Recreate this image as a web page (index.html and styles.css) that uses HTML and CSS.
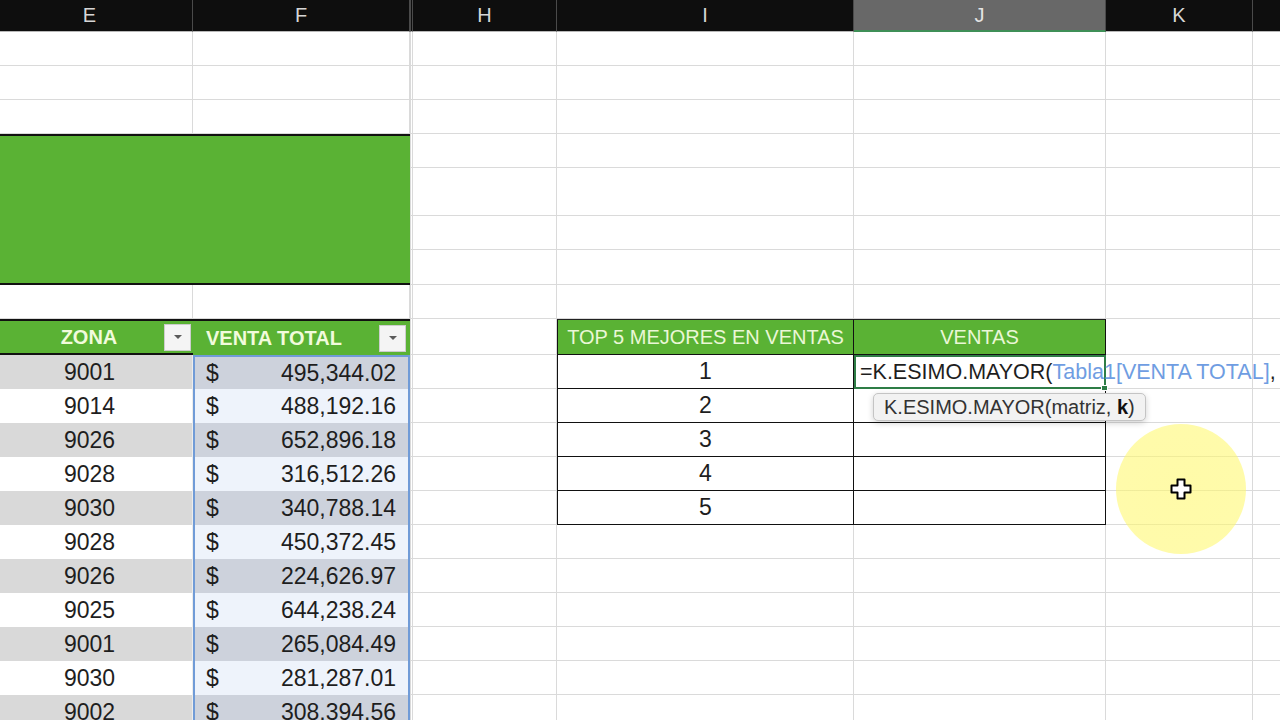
FILE: index.html
```html
<!DOCTYPE html>
<html lang="es">
<head>
<meta charset="utf-8">
<title>Excel - K.ESIMO.MAYOR</title>
<link rel="stylesheet" href="styles.css">
</head>
<body>
<div class="sheet">
  <!-- column headers -->
  <div class="c h">E</div><div class="c h">F</div><div class="c h g"></div><div class="c h">H</div><div class="c h">I</div><div class="c h sel">J</div><div class="c h">K</div><div class="c h"></div>
  <!-- rows 1-3 -->
  <div class="c"></div><div class="c"></div><div class="c g"></div><div class="c"></div><div class="c"></div><div class="c"></div><div class="c"></div><div class="c"></div>
  <div class="c"></div><div class="c"></div><div class="c g"></div><div class="c"></div><div class="c"></div><div class="c"></div><div class="c"></div><div class="c"></div>
  <div class="c"></div><div class="c"></div><div class="c g"></div><div class="c"></div><div class="c"></div><div class="c"></div><div class="c"></div><div class="c"></div>
  <!-- rows 4-7 with merged green band -->
  <div class="band"></div>
  <div class="c g"></div><div class="c"></div><div class="c"></div><div class="c"></div><div class="c"></div><div class="c"></div>
  <div class="c g"></div><div class="c"></div><div class="c"></div><div class="c"></div><div class="c"></div><div class="c"></div>
  <div class="c g"></div><div class="c"></div><div class="c"></div><div class="c"></div><div class="c"></div><div class="c"></div>
  <div class="c g"></div><div class="c"></div><div class="c"></div><div class="c"></div><div class="c"></div><div class="c"></div>
  <!-- row 8 -->
  <div class="c"></div><div class="c"></div><div class="c g"></div><div class="c"></div><div class="c"></div><div class="c"></div><div class="c"></div><div class="c"></div>
  <!-- row 9: table headers -->
  <div class="c th th-zona"><span></span><span>ZONA</span><span class="fbtn"><svg width="10" height="6" viewBox="0 0 10 6"><path d="M1 1h8L5 5z" fill="#5a5a5a"/></svg></span></div>
  <div class="c th th-venta"><span>VENTA TOTAL</span><span class="fbtn"><svg width="10" height="6" viewBox="0 0 10 6"><path d="M1 1h8L5 5z" fill="#5a5a5a"/></svg></span></div>
  <div class="c g"></div><div class="c"></div>
  <div class="c tb ti thead">TOP 5 MEJORES EN VENTAS</div>
  <div class="c tb thead">VENTAS</div>
  <div class="c"></div><div class="c"></div>
  <!-- row 10 -->
  <div class="c ze odd">9001</div><div class="c vf odd first"><span>$</span><span>495,344.02</span></div><div class="c g"></div><div class="c"></div>
  <div class="c tb ti num">1</div>
  <div class="c tb edit">
    <span class="formula">=K.ESIMO.MAYOR(<span class="ref">Tabla1[VENTA TOTAL]</span>,</span>
    <span class="handle"></span>
    <div class="tip">K.ESIMO.MAYOR(matriz, <b>k</b>)</div>
  </div>
  <div class="c"></div><div class="c"></div>
  <!-- row 11 -->
  <div class="c ze">9014</div><div class="c vf"><span>$</span><span>488,192.16</span></div><div class="c g"></div><div class="c"></div>
  <div class="c tb ti num">2</div><div class="c tb"></div><div class="c"></div><div class="c"></div>
  <!-- row 12 -->
  <div class="c ze odd">9026</div><div class="c vf odd"><span>$</span><span>652,896.18</span></div><div class="c g"></div><div class="c"></div>
  <div class="c tb ti num">3</div><div class="c tb"></div><div class="c"></div><div class="c"></div>
  <!-- row 13 -->
  <div class="c ze">9028</div><div class="c vf"><span>$</span><span>316,512.26</span></div><div class="c g"></div><div class="c"></div>
  <div class="c tb ti num">4</div><div class="c tb"></div><div class="c"></div><div class="c"></div>
  <!-- row 14 -->
  <div class="c ze odd">9030</div><div class="c vf odd"><span>$</span><span>340,788.14</span></div><div class="c g"></div><div class="c"></div>
  <div class="c tb ti num">5</div><div class="c tb"></div><div class="c"></div><div class="c"></div>
  <!-- row 15 -->
  <div class="c ze">9028</div><div class="c vf"><span>$</span><span>450,372.45</span></div><div class="c g"></div><div class="c"></div><div class="c"></div><div class="c"></div><div class="c"></div><div class="c"></div>
  <!-- row 16 -->
  <div class="c ze odd">9026</div><div class="c vf odd"><span>$</span><span>224,626.97</span></div><div class="c g"></div><div class="c"></div><div class="c"></div><div class="c"></div><div class="c"></div><div class="c"></div>
  <!-- row 17 -->
  <div class="c ze">9025</div><div class="c vf"><span>$</span><span>644,238.24</span></div><div class="c g"></div><div class="c"></div><div class="c"></div><div class="c"></div><div class="c"></div><div class="c"></div>
  <!-- row 18 -->
  <div class="c ze odd">9001</div><div class="c vf odd"><span>$</span><span>265,084.49</span></div><div class="c g"></div><div class="c"></div><div class="c"></div><div class="c"></div><div class="c"></div><div class="c"></div>
  <!-- row 19 -->
  <div class="c ze">9030</div><div class="c vf"><span>$</span><span>281,287.01</span></div><div class="c g"></div><div class="c"></div><div class="c"></div><div class="c"></div><div class="c"></div><div class="c"></div>
  <!-- row 20 -->
  <div class="c ze odd">9002</div><div class="c vf odd"><span>$</span><span>308,394.56</span></div><div class="c g"></div><div class="c"></div><div class="c"></div><div class="c"></div><div class="c"></div><div class="c"></div>
</div>

<div class="glow"></div>
<svg class="cursor" width="24" height="24" viewBox="0 0 24 24">
  <path d="M8.5 2.5h7v6h6v7h-6v6h-7v-6h-6v-7h6z" fill="#fff" stroke="#000" stroke-width="2" stroke-linejoin="round"/>
</svg>
</body>
</html>
```

FILE: styles.css
```css
* { box-sizing: border-box; }

html, body {
  margin: 0;
  padding: 0;
  background: #ffffff;
}

body {
  width: 1280px;
  height: 720px;
  overflow: hidden;
  position: relative;
  font-family: "Liberation Sans", Arial, sans-serif;
  color: #1e1e1e;
}

.sheet {
  display: grid;
  margin-left: -13px;
  grid-template-columns: 206px 217px 3px 144px 297px 252px 147px 100px;
  grid-template-rows: 32px 34px 34px 34px 34px 48px 34px 35px 34px 36px repeat(11, 34px);
}

.c {
  border-right: 1px solid #dadada;
  border-bottom: 1px solid #dadada;
  font-size: 23px;
  display: flex;
  align-items: center;
  min-width: 0;
  white-space: nowrap;
}

/* column headers */
.h {
  background: #0e0e0e;
  color: #d6d6d6;
  font-size: 20px;
  justify-content: center;
  border-right: 1px solid #4a4a4a;
  border-bottom: 1px solid #b8b8b8;
}
.h.sel {
  background: #686868;
  color: #e4e4e4;
  border-bottom: 2px solid #3f8f57;
}

/* hidden column G (double line) */
.g {
  border-left: 1px solid #dadada;
}
.h.g {
  border-left: 1px solid #4a4a4a;
}

/* merged green band */
.band {
  grid-column: span 2;
  grid-row: span 4;
  background: #5ab234;
  border-top: 2px solid #111111;
  border-bottom: 2px solid #111111;
}

/* left table headers */
.th {
  background: #5ab234;
  border-top: 2px solid #111111;
  border-right: none;
  color: #f1fbdc;
  font-weight: bold;
  font-size: 20px;
}
.th-zona {
  display: grid;
  grid-template-columns: 1fr auto 1fr;
  align-items: center;
  padding-right: 2px;
  border-bottom: 2px solid #111111;
}
.th-zona .fbtn { justify-self: end; }
.th-venta {
  justify-content: space-between;
  padding: 0 4px 0 13px;
  border-bottom: none;
}

.fbtn {
  width: 27px;
  height: 27px;
  background: #f4f4f4;
  border: 1px solid #cdcdcd;
  display: flex;
  align-items: center;
  justify-content: center;
}

/* left table data */
.ze {
  justify-content: center;
  border-bottom: none;
  border-right: 1px solid #ececec;
  background: #ffffff;
}
.ze.odd { background: #d9d9d9; }

.vf {
  justify-content: space-between;
  padding: 0 12px 0 11px;
  border-bottom: none;
  border-left: 2px solid #709bd7;
  border-right: 2px solid #709bd7;
  background: #eef3fb;
}
.vf.odd { background: #cdd2dc; }
.vf.first { border-top: 2px solid #709bd7; }

/* top 5 table */
.tb {
  border-right: 1px solid #111111;
  border-bottom: 1px solid #111111;
}
.ti { border-left: 1px solid #111111; }
.thead {
  background: #5ab234;
  border-top: 1px solid #222222;
  color: #eaf7d6;
  font-size: 20px;
  justify-content: center;
}
.num { justify-content: center; }

/* active editing cell */
.edit {
  position: relative;
  z-index: 2;
  border: 2px solid #2e7d46;
  padding-left: 4px;
  overflow: visible;
}
.formula {
  font-size: 21.5px;
  color: #1e1e1e;
}
.ref { color: #6f9de2; }

.handle {
  position: absolute;
  right: -4px;
  bottom: -4px;
  width: 7px;
  height: 6px;
  background: #2e7d46;
  border: 1px solid #ffffff;
}

.tip {
  position: absolute;
  left: 17px;
  top: 36px;
  height: 28px;
  padding: 0 10px;
  background: #f2f2f2;
  border: 1px solid #c4c4c4;
  border-radius: 5px;
  box-shadow: 0 2px 6px rgba(0, 0, 0, 0.18);
  font-size: 20px;
  line-height: 26px;
  color: #333333;
  white-space: nowrap;
}
.tip b { color: #111111; }

/* pointer highlight */
.glow {
  position: absolute;
  left: 1116px;
  top: 424px;
  width: 130px;
  height: 130px;
  border-radius: 50%;
  background: radial-gradient(circle, rgba(255, 248, 110, 0.6) 0%, rgba(255, 248, 110, 0.58) 84%, rgba(255, 248, 110, 0) 100%);
  pointer-events: none;
}
.cursor {
  position: absolute;
  left: 1169px;
  top: 477px;
}
```
